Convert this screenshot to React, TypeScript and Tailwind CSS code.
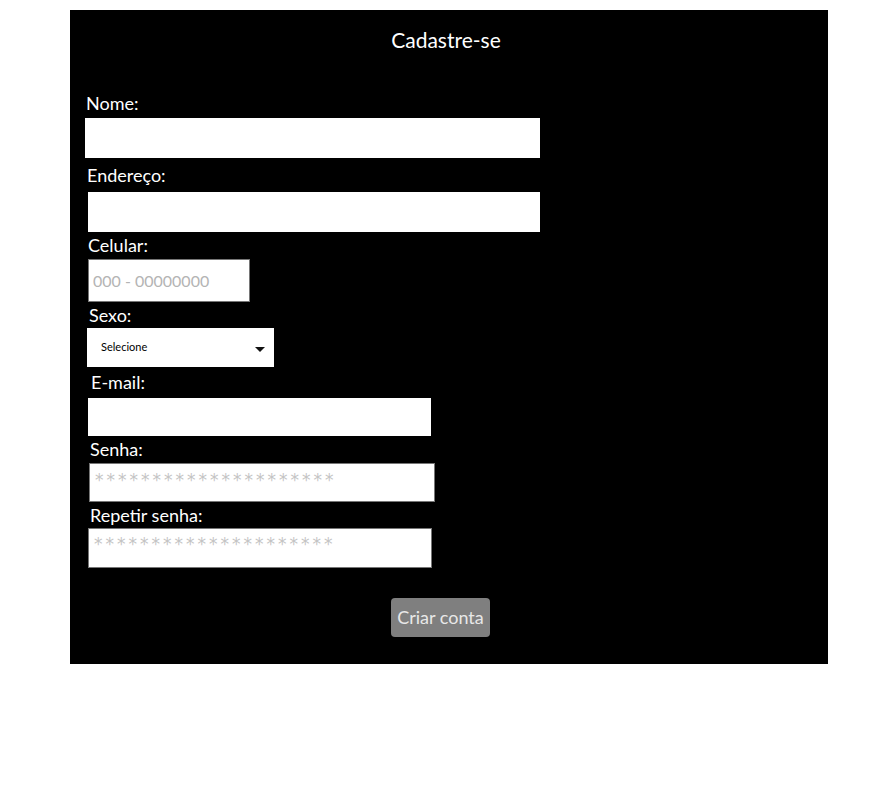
const font = { fontFamily: '"Lato", "Noto Sans", sans-serif' };

function Label({ text, h, ml }: { text: string; h: string; ml: string }) {
  return (
    <label className={`flex items-center text-[18px] text-white ${h} ${ml}`}>{text}</label>
  );
}

export default function App() {
  return (
    <div className="min-h-[795px] bg-white pt-[10px]" style={font}>
      <div className="ml-[70px] w-[758px] h-[654px] bg-black flex flex-col">
        <h1 className="text-center text-[21px] text-white leading-[26px] mt-[17px] h-[61px] pr-[6px]">
          Cadastre-se
        </h1>

        <Label text="Nome:" h="h-[30px]" ml="ml-[16px]" />
        <input className="ml-[15px] w-[455px] h-[40px] bg-white outline-none" />

        <Label text="Endereço:" h="h-[34px]" ml="ml-[17px]" />
        <input className="ml-[18px] w-[452px] h-[40px] bg-white outline-none" />

        <Label text="Celular:" h="h-[27px]" ml="ml-[18px]" />
        <input
          placeholder="000 - 00000000"
          className="ml-[18px] w-[162px] h-[43px] bg-white border border-[#767676] px-[4px] text-[16px] placeholder:text-[#b4b4b4] outline-none"
        />

        <Label text="Sexo:" h="h-[26px]" ml="ml-[19px]" />
        <div className="relative ml-[17px] w-[187px] h-[39px]">
          <select className="appearance-none w-full h-full bg-white pl-[14px] text-[11px] text-black outline-none">
            <option>Selecione</option>
          </select>
          <svg className="absolute right-[9px] top-[19px]" width="10" height="5" viewBox="0 0 10 5">
            <path d="M0 0 H10 L5 5 Z" fill="#111" />
          </svg>
        </div>

        <Label text="E-mail:" h="h-[31px]" ml="ml-[21px]" />
        <input className="ml-[18px] w-[343px] h-[38px] bg-white outline-none" />

        <Label text="Senha:" h="h-[27px]" ml="ml-[20px]" />
        <input
          placeholder="*********************"
          className="ml-[19px] w-[346px] h-[39px] bg-white border border-[#767676] pl-[5px] pb-[6px] font-['DejaVu_Sans'] text-[17px] tracking-[3px] placeholder:text-[#c4c4c4] outline-none"
        />

        <Label text="Repetir senha:" h="h-[26px]" ml="ml-[20px]" />
        <input
          placeholder="*********************"
          className="ml-[18px] w-[344px] h-[40px] bg-white border border-[#767676] pl-[5px] pb-[8px] font-['DejaVu_Sans'] text-[17px] tracking-[3px] placeholder:text-[#c4c4c4] outline-none"
        />

        <button className="mt-[30px] ml-[321px] w-[99px] h-[39px] rounded-[4px] bg-[#7f7f7f] text-[18px] text-[#e8e8e8]">
          Criar conta
        </button>
      </div>
    </div>
  );
}
